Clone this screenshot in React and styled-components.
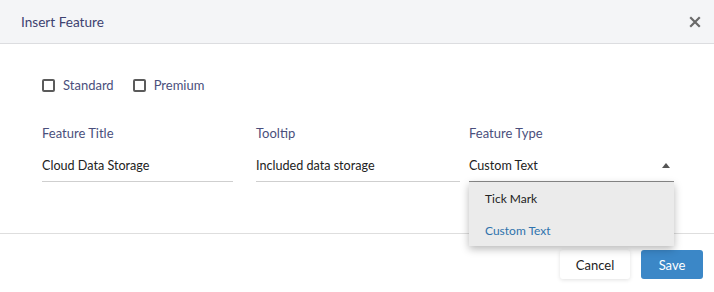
import React from "react";
import styled, { createGlobalStyle } from "styled-components";

const GlobalStyle = createGlobalStyle`
  body {
    margin: 0;
    font-family: Lato, "Open Sans", sans-serif;
    background: #fff;
  }
`;

const Modal = styled.div`
  width: 714px;
  height: 292px;
  background: #fff;
  display: flex;
  flex-direction: column;
`;

const Header = styled.div`
  height: 43px;
  background: #f4f5f7;
  border-bottom: 1px solid #dcdde0;
  display: flex;
  align-items: center;
  justify-content: space-between;
  padding: 0 13px 0 21px;
`;

const Title = styled.div`
  font-size: 13.6px;
  color: #3d4270;
`;

const Close = styled.button`
  border: 0;
  background: none;
  padding: 0;
  width: 12px;
  height: 12px;
  display: flex;
  cursor: pointer;
`;

const Body = styled.div`
  height: 190px;
  box-sizing: border-box;
  padding: 34px 40px 0 42px;
  border-bottom: 1px solid #dedede;
`;

const CheckRow = styled.div`
  display: flex;
  align-items: center;
  gap: 19px;
  height: 14px;
`;

const CheckLabel = styled.label`
  display: flex;
  align-items: center;
  gap: 8px;
  font-size: 13px;
  color: #4a4f7c;
`;

const Box = styled.span`
  width: 13px;
  height: 13px;
  box-sizing: border-box;
  border: 2px solid #5b5b5b;
  border-radius: 2px;
`;

const Fields = styled.div`
  margin-top: 33px;
  display: grid;
  grid-template-columns: 214px 213px 205px;
`;

const Field = styled.div`
  position: relative;
  width: ${(p) => p.$width}px;
  display: flex;
  flex-direction: column;
`;

const Label = styled.div`
  font-size: 13px;
  line-height: 16px;
  color: #4a4f7c;
`;

const Input = styled.div`
  margin-top: 8px;
  height: 32px;
  display: flex;
  align-items: center;
  justify-content: space-between;
  font-size: 12.6px;
  color: #222;
  border-bottom: 1px solid ${(p) => (p.$active ? "#8a8a8a" : "#cfcfcf")};
`;

const Caret = styled.span`
  width: 0;
  height: 0;
  margin-right: 4px;
  border-left: 4px solid transparent;
  border-right: 4px solid transparent;
  border-bottom: 5px solid #555;
`;

const Menu = styled.div`
  position: absolute;
  top: 57px;
  left: 0;
  width: 205px;
  background: #ebebeb;
  box-shadow: 0 3px 8px rgba(0, 0, 0, 0.28);
  z-index: 2;
`;

const Option = styled.div`
  height: 32px;
  display: flex;
  align-items: center;
  padding-left: 16px;
  font-size: 12px;
  color: ${(p) => (p.$selected ? "#2f73ad" : "#222")};
`;

const Footer = styled.div`
  flex: 1;
  display: flex;
  justify-content: flex-end;
  align-items: flex-start;
  gap: 11px;
  padding: 16px 11px 0 0;
`;

const Button = styled.button`
  height: 29px;
  border: 0;
  border-radius: 3px;
  font-family: Lato, sans-serif;
  font-size: 13px;
  padding: 0;
  width: ${(p) => (p.$primary ? "62px" : "70px")};
  background: ${(p) => (p.$primary ? "#3b87c7" : "#fff")};
  color: ${(p) => (p.$primary ? "#fff" : "#222")};
  box-shadow: ${(p) => (p.$primary ? "none" : "0 1px 4px rgba(0,0,0,0.12)")};
  cursor: pointer;
`;

export default function App() {
  return (
    <>
      <GlobalStyle />
      <Modal>
        <Header>
          <Title>Insert Feature</Title>
          <Close aria-label="close">
            <svg width="12" height="12" viewBox="0 0 12 12">
              <path d="M2 2 L10 10 M10 2 L2 10" stroke="#6a6a6a" strokeWidth="2.2" strokeLinecap="square" />
            </svg>
          </Close>
        </Header>
        <Body>
          <CheckRow>
            <CheckLabel>
              <Box />
              Standard
            </CheckLabel>
            <CheckLabel>
              <Box />
              Premium
            </CheckLabel>
          </CheckRow>
          <Fields>
            <Field $width={191}>
              <Label>Feature Title</Label>
              <Input>Cloud Data Storage</Input>
            </Field>
            <Field $width={204}>
              <Label>Tooltip</Label>
              <Input>Included data storage</Input>
            </Field>
            <Field $width={205}>
              <Label>Feature Type</Label>
              <Input $active>
                Custom Text
                <Caret />
              </Input>
              <Menu>
                <Option>Tick Mark</Option>
                <Option $selected>Custom Text</Option>
              </Menu>
            </Field>
          </Fields>
        </Body>
        <Footer>
          <Button>Cancel</Button>
          <Button $primary>Save</Button>
        </Footer>
      </Modal>
    </>
  );
}
